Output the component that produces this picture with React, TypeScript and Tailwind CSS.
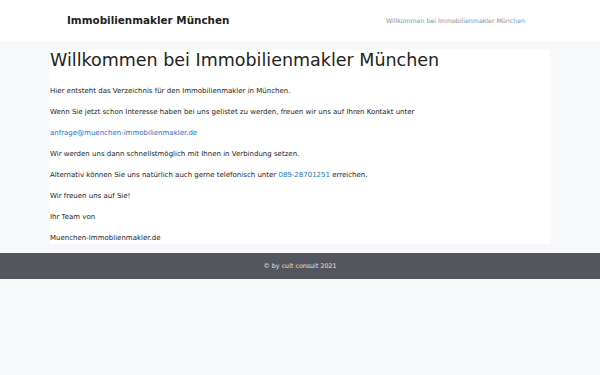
export default function App() {
  const font = {fontFamily: '"DejaVu Sans", sans-serif'};
  return (
    <div className="min-h-[375px] bg-[#f7f8f9] text-[#222]" style={font}>
      <header className="flex h-[41px] items-center justify-between bg-white pl-[67px] pr-[75px]">
        <div className="text-[10.4px] font-bold text-[#222]">Immobilienmakler München</div>
        <nav className="text-[6.25px] text-[#8292a8]">Willkommen bei Immobilienmakler München</nav>
      </header>

      <main className="mx-auto mt-[9px] w-[500px] bg-white">
        <h1 className="text-[17.5px] leading-[20px] font-normal text-[#222]">
          Willkommen bei Immobilienmakler München
        </h1>
        <div className="mt-[14px] flex flex-col gap-[7px] text-[7px] leading-[14px] text-[#222]">
          <p>Hier entsteht das Verzeichnis für den Immobilienmakler in München.</p>
          <p>
            Wenn Sie jetzt schon Interesse haben bei uns gelistet zu werden, freuen wir uns auf Ihren
            Kontakt unter
          </p>
          <p>
            <a className="text-[#1e73be]">anfrage@muenchen-immobilienmakler.de</a>
          </p>
          <p>Wir werden uns dann schnellstmöglich mit Ihnen in Verbindung setzen.</p>
          <p>
            Alternativ können Sie uns natürlich auch gerne telefonisch unter{" "}
            <a className="text-[#1e73be]">089-28701251</a> erreichen.
          </p>
          <p>Wir freuen uns auf Sie!</p>
          <p>Ihr Team von</p>
          <p className="-mb-[1px]">Muenchen-Immoblienmakler.de</p>
        </div>
      </main>

      <footer className="mt-[9px] flex h-[26px] items-center justify-center bg-[#55555e] text-[6.35px] text-[#e5e5e5]">
        © by cult consult 2021
      </footer>
    </div>
  );
}
